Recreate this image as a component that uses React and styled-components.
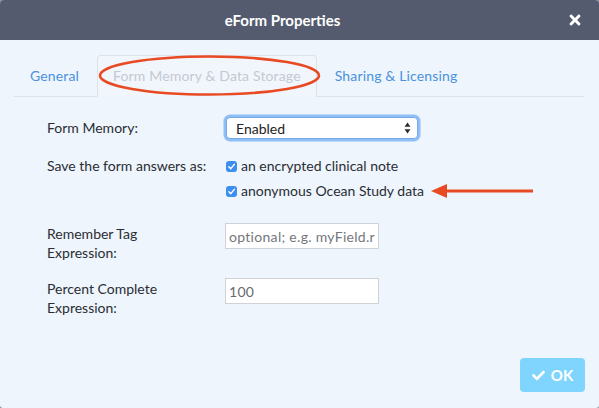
import React from 'react';
import styled, { createGlobalStyle } from 'styled-components';
import { FaTimes, FaCheck } from 'react-icons/fa';

const Global = createGlobalStyle`
  html, body {
    margin: 0;
    padding: 0;
    background: #8a8d96;
  }
  body {
    font-family: Lato, "Open Sans", sans-serif;
  }
`;

const Window = styled.div`
  width: 599px;
  height: 408px;
  display: flex;
  flex-direction: column;
  background: #eef5fd;
  border-radius: 4px 4px 3px 3px;
  overflow: hidden;
`;

const Header = styled.div`
  height: 40px;
  flex: none;
  background: #545b6e;
  display: flex;
  align-items: center;
  padding: 0 16px 0 0;
  box-sizing: border-box;
`;

const Title = styled.h1`
  flex: 1;
  margin: 0;
  text-align: center;
  font-size: 15px;
  font-weight: 700;
  color: #ffffff;
  padding-right: 2px;
`;

const Close = styled.button`
  border: none;
  background: none;
  padding: 0;
  color: #ffffff;
  display: flex;
  align-items: center;
  cursor: pointer;
`;

const Body = styled.div`
  flex: 1;
  display: flex;
  flex-direction: column;
  padding: 15px 15px 15px 14px;
  position: relative;
`;

const Tabs = styled.ul`
  list-style: none;
  margin: 0;
  padding: 0;
  display: flex;
  border-bottom: 1px solid #dde2e8;
  height: 41px;
`;

const Tab = styled.li`
  margin-right: 2px;
  padding: 10px 15px;
  font-size: 14px;
  letter-spacing: 0.15px;
  line-height: 20px;
  border: 1px solid ${p => (p.$active ? '#dde2e8' : 'transparent')};
  border-bottom-color: ${p => (p.$active ? '#f1f6fc' : 'transparent')};
  border-radius: 4px 4px 0 0;
  background: ${p => (p.$active ? '#f1f6fc' : 'transparent')};
  color: ${p => (p.$active ? '#c3c9d3' : '#4a92dc')};
  margin-bottom: -1px;
  white-space: nowrap;
`;

const Annotation = styled.svg`
  position: absolute;
  left: 0;
  top: 0;
  pointer-events: none;
  overflow: visible;
`;

const Form = styled.div`
  padding-left: 33px;
  display: flex;
  flex-direction: column;
`;

const Row = styled.div`
  display: grid;
  grid-template-columns: 177px 220px;
  align-items: ${p => p.$align || 'center'};
  margin-top: ${p => p.$gap}px;
`;

const Label = styled.div`
  font-size: 14px;
  line-height: ${p => p.$lh || 20}px;
  color: #2a2d33;
  width: ${p => p.$width || 170}px;
  padding-top: ${p => p.$pad || 0}px;
`;

const SelectWrap = styled.div`
  position: relative;
  width: 190px;
  height: 20px;
  margin-left: 2px;
  border: 1px solid #7aa7e6;
  border-radius: 4px;
  box-shadow: 0 0 0 2.5px rgba(110, 172, 245, 0.75);
  background: #ffffff;
  display: flex;
  align-items: center;
`;

const Select = styled.select`
  appearance: none;
  border: none;
  background: transparent;
  outline: none;
  font-family: Lato, sans-serif;
  font-size: 14px;
  color: #222;
  width: 100%;
  height: 100%;
  padding: 0 0 0 9px;
`;

const Arrows = styled.svg`
  position: absolute;
  right: 6px;
  top: 4px;
  pointer-events: none;
`;

const Checks = styled.div`
  display: flex;
  flex-direction: column;
  gap: 5px;
  padding-left: 2px;
`;

const CheckRow = styled.label`
  display: flex;
  align-items: center;
  gap: 4px;
  font-size: 14px;
  line-height: 20px;
  color: #2a2d33;
`;

const Box = styled.span`
  width: 11px;
  height: 11px;
  border-radius: 3px;
  background: #3d8ef1;
  display: flex;
  align-items: center;
  justify-content: center;
`;

const TextInput = styled.input`
  box-sizing: border-box;
  width: 154px;
  height: 26px;
  margin-left: 1px;
  border: 1px solid #cfd2d6;
  background: #ffffff;
  font-family: Lato, sans-serif;
  font-size: 14px;
  letter-spacing: 0.3px;
  color: #666a70;
  padding: 0 3px;
  outline: none;
  &::placeholder {
    color: #73777d;
  }
`;

const Footer = styled.div`
  margin-top: auto;
  display: flex;
  justify-content: flex-end;
`;

const OkButton = styled.button`
  width: 65px;
  height: 34px;
  border: none;
  border-radius: 4px;
  background: #80d5fe;
  color: #ffffff;
  font-family: Lato, sans-serif;
  font-weight: 700;
  font-size: 15px;
  display: flex;
  align-items: center;
  justify-content: center;
  gap: 6px;
  margin-right: -1px;
  margin-bottom: 1px;
`;

const Tick = () => (
  <svg width="9" height="9" viewBox="0 0 10 10">
    <path d="M2 5.2 L4.2 7.4 L8.2 2.6" fill="none" stroke="#fff" strokeWidth="1.6" strokeLinecap="round" strokeLinejoin="round" />
  </svg>
);

const Check = ({ children }) => (
  <CheckRow>
    <Box><Tick /></Box>
    {children}
  </CheckRow>
);

export default function App() {
  return (
    <>
      <Global />
      <Window>
        <Header>
          <Title>eForm Properties</Title>
          <Close aria-label="close"><FaTimes size={16} /></Close>
        </Header>
        <Body>
          <Tabs>
            <Tab>General</Tab>
            <Tab $active>Form Memory &amp; Data Storage</Tab>
            <Tab>Sharing &amp; Licensing</Tab>
          </Tabs>
          <Form>
            <Row $gap={20}>
              <Label>Form Memory:</Label>
              <SelectWrap>
                <Select defaultValue="Enabled">
                  <option>Enabled</option>
                  <option>Disabled</option>
                </Select>
                <Arrows width="7" height="12" viewBox="0 0 7 12">
                  <path d="M3.5 0.5 L6.5 4.8 L0.5 4.8 Z M3.5 11.5 L6.5 7.2 L0.5 7.2 Z" fill="#2b2b2b" />
                </Arrows>
              </SelectWrap>
            </Row>
            <Row $gap={17} $align="start">
              <Label>Save the form answers as:</Label>
              <Checks>
                <Check>an encrypted clinical note</Check>
                <Check>anonymous Ocean Study data</Check>
              </Checks>
            </Row>
            <Row $gap={22} $align="start">
              <Label $width={150} $lh={19} $pad={1}>Remember Tag Expression:</Label>
              <TextInput placeholder="optional; e.g. myField.rememberTag" />
            </Row>
            <Row $gap={16} $align="start">
              <Label $width={150} $lh={19} $pad={1}>Percent Complete Expression:</Label>
              <TextInput defaultValue="100" />
            </Row>
          </Form>
          <Footer>
            <OkButton><FaCheck size={13} />OK</OkButton>
          </Footer>
          <Annotation width="599" height="368">
            <ellipse cx="209.5" cy="35.5" rx="109.5" ry="19" fill="none" stroke="#e84a24" strokeWidth="2.6" />
            <line x1="444" y1="151" x2="533" y2="151" stroke="#e84a24" strokeWidth="3" />
            <path d="M431 151 L447 144 L447 158 Z" fill="#e84a24" />
          </Annotation>
        </Body>
      </Window>
    </>
  );
}
